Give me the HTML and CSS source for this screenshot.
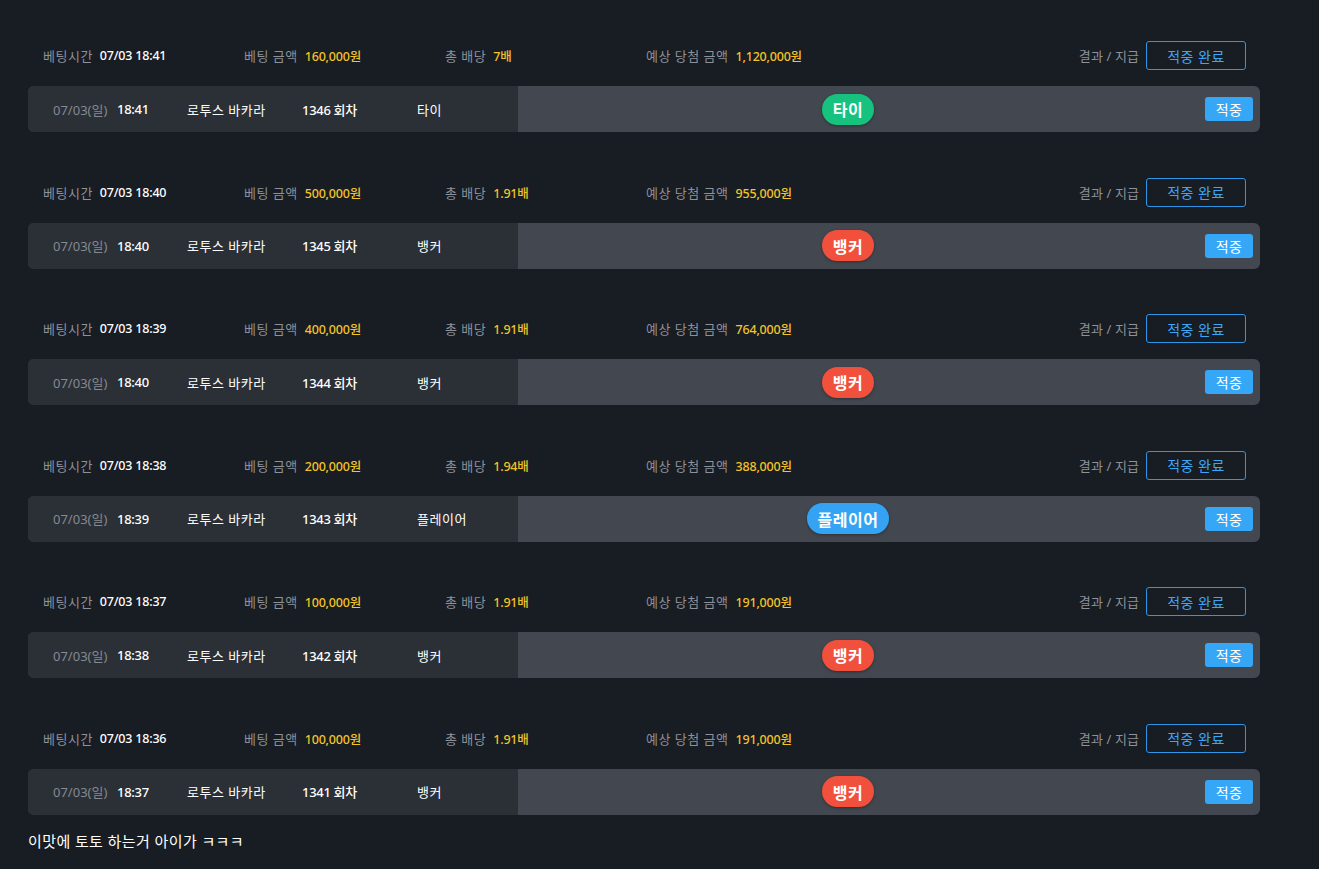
FILE: index.html
```html
<!DOCTYPE html>
<html lang="ko">
<head>
<meta charset="utf-8">
<title>베팅 내역</title>
<link rel="stylesheet" href="styles.css">
</head>
<body>
<div class="page">

  <section class="bet">
    <div class="bet-head">
      <div class="field"><span class="label">베팅시간</span><span class="val">07/03 18:41</span></div>
      <div class="field"><span class="label">베팅 금액</span><span class="val gold">160,000원</span></div>
      <div class="field"><span class="label">총 배당</span><span class="val gold">7배</span></div>
      <div class="field"><span class="label">예상 당첨 금액</span><span class="val gold">1,120,000원</span></div>
      <div class="result"><span class="label">결과 / 지급</span><span class="done">적중 완료</span></div>
    </div>
    <div class="bet-row">
      <div class="row-info">
        <span class="c-date">07/03(일)</span>
        <span class="c-time">18:41</span>
        <span class="c-game">로투스 바카라</span>
        <span class="c-round">1346 회차</span>
        <span class="c-pick">타이</span>
      </div>
      <div class="row-result">
        <div class="badge-area"><span class="badge tie">타이</span></div>
        <div class="hit-area"><span class="hit">적중</span></div>
      </div>
    </div>
  </section>

  <section class="bet">
    <div class="bet-head">
      <div class="field"><span class="label">베팅시간</span><span class="val">07/03 18:40</span></div>
      <div class="field"><span class="label">베팅 금액</span><span class="val gold">500,000원</span></div>
      <div class="field"><span class="label">총 배당</span><span class="val gold">1.91배</span></div>
      <div class="field"><span class="label">예상 당첨 금액</span><span class="val gold">955,000원</span></div>
      <div class="result"><span class="label">결과 / 지급</span><span class="done">적중 완료</span></div>
    </div>
    <div class="bet-row">
      <div class="row-info">
        <span class="c-date">07/03(일)</span>
        <span class="c-time">18:40</span>
        <span class="c-game">로투스 바카라</span>
        <span class="c-round">1345 회차</span>
        <span class="c-pick">뱅커</span>
      </div>
      <div class="row-result">
        <div class="badge-area"><span class="badge banker">뱅커</span></div>
        <div class="hit-area"><span class="hit">적중</span></div>
      </div>
    </div>
  </section>

  <section class="bet">
    <div class="bet-head">
      <div class="field"><span class="label">베팅시간</span><span class="val">07/03 18:39</span></div>
      <div class="field"><span class="label">베팅 금액</span><span class="val gold">400,000원</span></div>
      <div class="field"><span class="label">총 배당</span><span class="val gold">1.91배</span></div>
      <div class="field"><span class="label">예상 당첨 금액</span><span class="val gold">764,000원</span></div>
      <div class="result"><span class="label">결과 / 지급</span><span class="done">적중 완료</span></div>
    </div>
    <div class="bet-row">
      <div class="row-info">
        <span class="c-date">07/03(일)</span>
        <span class="c-time">18:40</span>
        <span class="c-game">로투스 바카라</span>
        <span class="c-round">1344 회차</span>
        <span class="c-pick">뱅커</span>
      </div>
      <div class="row-result">
        <div class="badge-area"><span class="badge banker">뱅커</span></div>
        <div class="hit-area"><span class="hit">적중</span></div>
      </div>
    </div>
  </section>

  <section class="bet">
    <div class="bet-head">
      <div class="field"><span class="label">베팅시간</span><span class="val">07/03 18:38</span></div>
      <div class="field"><span class="label">베팅 금액</span><span class="val gold">200,000원</span></div>
      <div class="field"><span class="label">총 배당</span><span class="val gold">1.94배</span></div>
      <div class="field"><span class="label">예상 당첨 금액</span><span class="val gold">388,000원</span></div>
      <div class="result"><span class="label">결과 / 지급</span><span class="done">적중 완료</span></div>
    </div>
    <div class="bet-row">
      <div class="row-info">
        <span class="c-date">07/03(일)</span>
        <span class="c-time">18:39</span>
        <span class="c-game">로투스 바카라</span>
        <span class="c-round">1343 회차</span>
        <span class="c-pick">플레이어</span>
      </div>
      <div class="row-result">
        <div class="badge-area"><span class="badge player">플레이어</span></div>
        <div class="hit-area"><span class="hit">적중</span></div>
      </div>
    </div>
  </section>

  <section class="bet">
    <div class="bet-head">
      <div class="field"><span class="label">베팅시간</span><span class="val">07/03 18:37</span></div>
      <div class="field"><span class="label">베팅 금액</span><span class="val gold">100,000원</span></div>
      <div class="field"><span class="label">총 배당</span><span class="val gold">1.91배</span></div>
      <div class="field"><span class="label">예상 당첨 금액</span><span class="val gold">191,000원</span></div>
      <div class="result"><span class="label">결과 / 지급</span><span class="done">적중 완료</span></div>
    </div>
    <div class="bet-row">
      <div class="row-info">
        <span class="c-date">07/03(일)</span>
        <span class="c-time">18:38</span>
        <span class="c-game">로투스 바카라</span>
        <span class="c-round">1342 회차</span>
        <span class="c-pick">뱅커</span>
      </div>
      <div class="row-result">
        <div class="badge-area"><span class="badge banker">뱅커</span></div>
        <div class="hit-area"><span class="hit">적중</span></div>
      </div>
    </div>
  </section>

  <section class="bet">
    <div class="bet-head">
      <div class="field"><span class="label">베팅시간</span><span class="val">07/03 18:36</span></div>
      <div class="field"><span class="label">베팅 금액</span><span class="val gold">100,000원</span></div>
      <div class="field"><span class="label">총 배당</span><span class="val gold">1.91배</span></div>
      <div class="field"><span class="label">예상 당첨 금액</span><span class="val gold">191,000원</span></div>
      <div class="result"><span class="label">결과 / 지급</span><span class="done">적중 완료</span></div>
    </div>
    <div class="bet-row">
      <div class="row-info">
        <span class="c-date">07/03(일)</span>
        <span class="c-time">18:37</span>
        <span class="c-game">로투스 바카라</span>
        <span class="c-round">1341 회차</span>
        <span class="c-pick">뱅커</span>
      </div>
      <div class="row-result">
        <div class="badge-area"><span class="badge banker">뱅커</span></div>
        <div class="hit-area"><span class="hit">적중</span></div>
      </div>
    </div>
  </section>

  <p class="comment">이맛에 토토 하는거 아이가 ㅋㅋㅋ</p>
</div>
</body>
</html>
```

FILE: styles.css
```css
html, body {
  margin: 0;
  padding: 0;
  background: #181c23;
}

body {
  font-family: "Noto Sans", "Noto Sans CJK KR", sans-serif;
  font-size: 13px;
  color: #ffffff;
}

.page {
  width: 1232px;
  padding: 41px 0 0 28px;
  display: flex;
  flex-direction: column;
  gap: 45.6px;
}

.bet {
  display: flex;
  flex-direction: column;
  gap: 16px;
}

.bet-head {
  height: 29px;
  display: flex;
  align-items: center;
  padding: 0 14px 0 15px;
}

.field {
  width: 201px;
  display: flex;
  align-items: center;
  gap: 7px;
  white-space: nowrap;
}

.label {
  color: #8d9199;
  letter-spacing: 0.5px;
}

.val {
  color: #ffffff;
  font-weight: 500;
  font-size: 12.5px;
  letter-spacing: -0.2px;
}

.val.gold {
  color: #f3c327;
}

.result {
  margin-left: auto;
  display: flex;
  align-items: center;
  gap: 7px;
}

.result .label {
  letter-spacing: 0.1px;
}

.done {
  box-sizing: border-box;
  width: 100px;
  height: 29px;
  border: 1px solid #2f95e6;
  border-radius: 3px;
  color: #3ea6f6;
  font-size: 14px;
  letter-spacing: 0.5px;
  display: flex;
  align-items: center;
  justify-content: center;
}

.bet-row {
  height: 46px;
  display: flex;
  border-radius: 6px;
  overflow: hidden;
  background: #434850;
}

.row-info {
  width: 490px;
  background: #2b2f36;
  display: grid;
  grid-template-columns: 64px 70px 115px 115px 1fr;
  align-items: center;
  padding-left: 25px;
  box-sizing: border-box;
  white-space: nowrap;
}

.c-date {
  color: #858990;
}

.c-time, .c-round {
  font-weight: 500;
  letter-spacing: -0.3px;
}

.c-game, .c-pick {
  letter-spacing: 0.5px;
}

.row-result {
  flex: 1;
  display: flex;
  align-items: center;
}

.badge-area {
  flex: 1;
  display: flex;
  justify-content: center;
}

.badge {
  height: 31px;
  padding: 0 11px;
  min-width: 28px;
  border-radius: 16px;
  display: flex;
  align-items: center;
  justify-content: center;
  color: #ffffff;
  font-size: 16px;
  font-weight: 700;
  letter-spacing: 0.5px;
  box-shadow: 0 1px 3px rgba(0, 0, 0, 0.35);
}

.badge.tie { background: #17c27f; }
.badge.banker { background: #f1513c; }
.badge.player { background: #35a3f4; }

.hit-area {
  width: 82px;
  display: flex;
  justify-content: flex-end;
  padding-right: 7px;
  box-sizing: border-box;
}

.hit {
  width: 48px;
  height: 24px;
  border-radius: 3px;
  background: #36a7f7;
  color: #ffffff;
  font-size: 14px;
  letter-spacing: 0.3px;
  display: flex;
  align-items: center;
  justify-content: center;
}

.comment {
  margin: -30px 0 0 0;
  font-size: 15px;
  line-height: 20px;
  letter-spacing: 0.4px;
  color: #ffffff;
}
```
